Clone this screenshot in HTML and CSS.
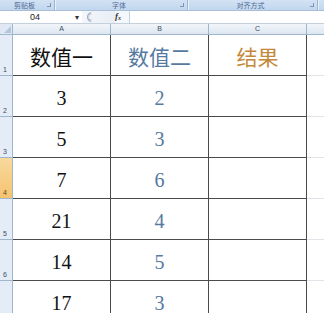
FILE: index.html
```html
<!DOCTYPE html>
<html lang="zh">
<head>
<meta charset="utf-8">
<link rel="stylesheet" href="styles.css">
</head>
<body>
<div class="ribbon">
  <div class="grp g1"><span class="glabel">剪贴板</span><span class="launch"></span></div>
  <div class="grp g2"><span class="glabel">字体</span><span class="launch"></span></div>
  <div class="grp g3"><span class="glabel">对齐方式</span><span class="launch"></span></div>
  <div class="grp g4"></div>
</div>
<div class="fbar">
  <div class="namebox"><span class="nbtext">04</span><span class="nbarrow">▾</span></div>
  <div class="splitter">
    <svg width="14" height="12" viewBox="0 0 14 12"><path d="M9 1.5 A6 5 0 0 0 9 10.5" fill="none" stroke="#9aa8bb" stroke-width="1.2"/><path d="M10 3 A3.5 3 0 0 0 10 9" fill="none" stroke="#c9d3df" stroke-width="1"/></svg>
  </div>
  <div class="fx">f<sub>x</sub></div>
  <div class="finput"></div>
</div>
<div class="sheet">
  <div class="corner"><span class="tri"></span></div>
  <div class="colh">A</div>
  <div class="colh">B</div>
  <div class="colh">C</div>
  <div class="colh colh-d"></div>

  <div class="rowh">1</div>
  <div class="cell cjk">数值一</div>
  <div class="cell cjk blue">数值二</div>
  <div class="cell cjk orange">结果</div>
  <div class="cell dcol"></div>

  <div class="rowh">2</div>
  <div class="cell num">3</div>
  <div class="cell num blue">2</div>
  <div class="cell"></div>
  <div class="cell dcol"></div>

  <div class="rowh">3</div>
  <div class="cell num">5</div>
  <div class="cell num blue">3</div>
  <div class="cell"></div>
  <div class="cell dcol"></div>

  <div class="rowh sel">4</div>
  <div class="cell num">7</div>
  <div class="cell num blue">6</div>
  <div class="cell"></div>
  <div class="cell dcol"></div>

  <div class="rowh">5</div>
  <div class="cell num">21</div>
  <div class="cell num blue">4</div>
  <div class="cell"></div>
  <div class="cell dcol"></div>

  <div class="rowh">6</div>
  <div class="cell num">14</div>
  <div class="cell num blue">5</div>
  <div class="cell"></div>
  <div class="cell dcol"></div>

  <div class="rowh"></div>
  <div class="cell num">17</div>
  <div class="cell num blue">3</div>
  <div class="cell"></div>
  <div class="cell dcol"></div>
</div>
</body>
</html>
```
FILE: styles.css
```css
* { box-sizing: border-box; }
html, body { margin: 0; padding: 0; }
body {
  width: 324px;
  height: 313px;
  overflow: hidden;
  background: #fff;
  font-family: "Liberation Sans", "Noto Sans CJK SC", sans-serif;
}

.ribbon {
  height: 11px;
  display: flex;
  background: linear-gradient(#d3e2f4, #c1d6ee);
  border-bottom: 1px solid #a9bfd9;
}
.grp {
  position: relative;
  display: flex;
  align-items: center;
  justify-content: center;
  border-right: 1px solid #e9f1fb;
  box-shadow: inset -1px 0 0 #9fb6d3;
}
.g1 { width: 56px; }
.g2 { width: 133px; }
.g3 { width: 130px; }
.g4 { flex: 1; border-right: none; box-shadow: none; }
.glabel {
  font-family: "Noto Sans CJK SC", sans-serif;
  font-size: 7px;
  line-height: 10px;
  color: #4d6a92;
  margin-right: 6px;
}
.launch {
  position: absolute;
  right: 4px;
  top: 3px;
  width: 4px;
  height: 4px;
  border-right: 1px solid #7d94b3;
  border-bottom: 1px solid #7d94b3;
}

.fbar {
  height: 13px;
  display: flex;
  align-items: center;
  background: #f4f7fb;
  border-bottom: 1px solid #c5d0dd;
}
.namebox {
  width: 82px;
  height: 12px;
  display: flex;
  align-items: center;
  background: #fff;
}
.nbtext {
  font-size: 9px;
  color: #222;
  margin-left: 30px;
  flex: 1;
}
.nbarrow {
  font-size: 8px;
  color: #333;
  margin-right: 3px;
}
.splitter {
  width: 33px;
  height: 12px;
  display: flex;
  align-items: center;
  background: linear-gradient(90deg, #f3f6fa, #e8eef6);
}
.fx {
  width: 14px;
  font-family: "Liberation Serif", serif;
  font-style: italic;
  font-weight: bold;
  font-size: 9px;
  color: #333;
  line-height: 12px;
}
.fx sub { font-size: 6px; vertical-align: -1px; }
.finput {
  flex: 1;
  height: 12px;
  background: #fff;
  border-left: 1px solid #c5d0dd;
}

.sheet {
  display: grid;
  grid-template-columns: 13px 98px 98px 98px 1fr;
  grid-template-rows: 11px repeat(7, 41px);
}
.corner {
  position: relative;
  background: #dfe8f4;
  border-right: 1px solid #9eb6ce;
  border-bottom: 1px solid #9eb6ce;
}
.tri {
  position: absolute;
  right: 1px;
  bottom: 1px;
  width: 0;
  height: 0;
  border-left: 7px solid transparent;
  border-bottom: 7px solid #b4c5da;
}
.colh {
  background: linear-gradient(#f1f5fa, #dde6f1);
  border-right: 1px solid #9eb6ce;
  border-bottom: 1px solid #9eb6ce;
  font-size: 7px;
  line-height: 10px;
  color: #3a4a5e;
  text-align: center;
}
.colh-d { border-right: none; }

.rowh {
  background: #e4ecf7;
  border-right: 1px solid #9eb6ce;
  border-bottom: 1px solid #9eb6ce;
  font-size: 7px;
  color: #3f4e62;
  display: flex;
  align-items: flex-end;
  padding-left: 3px;
  padding-bottom: 1px;
  line-height: 8px;
}
.rowh.sel {
  background: linear-gradient(#f9d99d, #f6c36f);
  color: #5a4a30;
}

.cell {
  border-right: 1px solid #4a4a4a;
  border-bottom: 1px solid #4a4a4a;
  display: flex;
  align-items: center;
  justify-content: center;
  color: #111;
}
.dcol {
  border-right: none;
  border-bottom: 1px solid #dfe3ea;
}
.cjk {
  font-family: "Noto Sans CJK SC", sans-serif;
  font-size: 21px;
  padding-top: 2px;
}
.num {
  font-family: "Liberation Serif", serif;
  font-size: 20px;
  padding-top: 4px;
}
.blue { color: #56799f; }
.orange { color: #c4883a; }
```
